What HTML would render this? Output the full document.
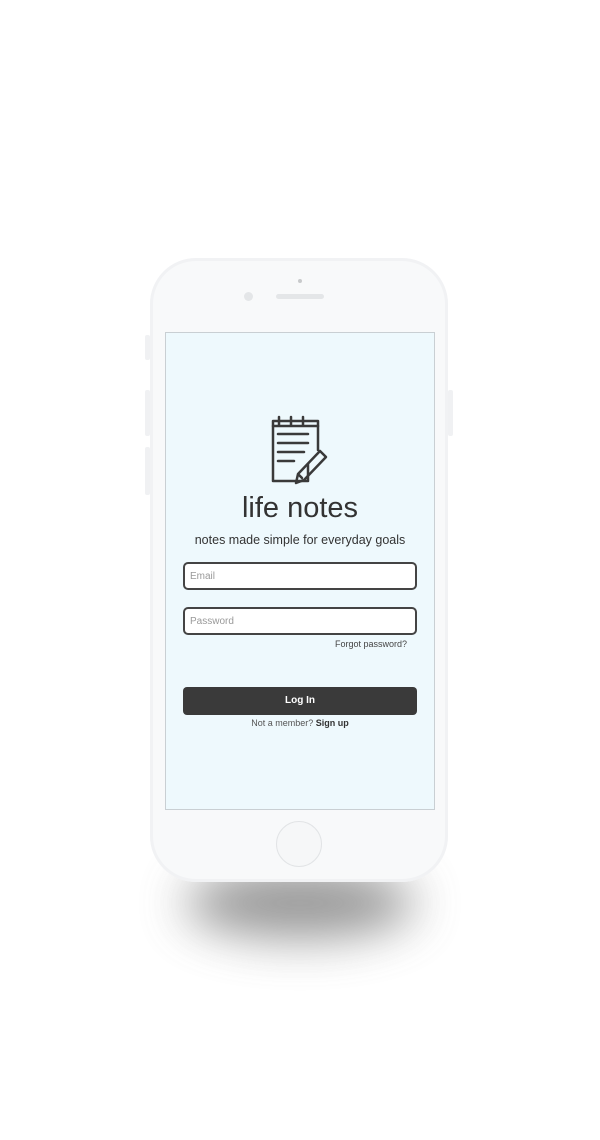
<!DOCTYPE html>
<html><head><style>
body{margin:0;width:600px;height:1140px;background:#fff;position:relative;overflow:hidden;font-family:"Liberation Sans",sans-serif}
.abs{position:absolute}
.shadow{left:185px;top:868px;width:230px;height:70px;border-radius:50%;background:#6a6a6a;filter:blur(24px);opacity:.7}
.phone{left:150px;top:258px;width:298px;height:624px;border-radius:46px;background:#f8f9fa;box-shadow:0 0 0 3px #f1f2f4 inset}
.screen{left:165px;top:332px;width:268px;height:476px;background:#eef9fd;border:1px solid #c9cfd3}
.btn{background:#f0f1f3;border-radius:2px}
.inp{box-sizing:border-box;left:183px;width:234px;height:28px;background:#fff;border:2px solid #444;border-radius:5px;color:#999;font-size:10px;padding:7px 5px}
</style></head><body>
<div class="abs shadow"></div>
<div class="abs btn" style="left:145px;top:335px;width:5px;height:25px"></div>
<div class="abs btn" style="left:145px;top:390px;width:5px;height:46px"></div>
<div class="abs btn" style="left:145px;top:447px;width:5px;height:48px"></div>
<div class="abs btn" style="left:448px;top:390px;width:5px;height:46px"></div>
<div class="abs phone"></div>
<div class="abs" style="left:298px;top:279px;width:4px;height:4px;border-radius:50%;background:#c8cacc"></div>
<div class="abs" style="left:244px;top:292px;width:9px;height:9px;border-radius:50%;background:#e4e6e8"></div>
<div class="abs" style="left:276px;top:294px;width:48px;height:5px;border-radius:3px;background:#e4e6e8"></div>
<div class="abs" style="left:276px;top:821px;width:44px;height:44px;border-radius:50%;background:#f6f7f8;border:1px solid #e2e4e6"></div>
<div class="abs screen"></div>
<svg class="abs" style="left:268px;top:414px" width="64" height="72" viewBox="0 0 64 72" fill="none" stroke="#3a3a3a" stroke-width="2.5" stroke-linecap="round" stroke-linejoin="round">
<path d="M40 50V67H5V7H50V36"/>
<path d="M11 3V11M23 3V11M35 3V11M5 12H50"/>
<path d="M10 20H40M10 29H40M10 38H36M10 47H26"/>
<path d="M52 37L58 43L36 66L28 69L30 60Z M34 64L31 61"/>
</svg>
<div class="abs" style="left:165px;width:270px;top:492px;text-align:center;font-size:29px;color:#333">life notes</div>
<div class="abs" style="left:165px;width:270px;top:533px;text-align:center;font-size:12.5px;color:#333">notes made simple for everyday goals</div>
<div class="abs inp" style="top:562px">Email</div>
<div class="abs inp" style="top:607px">Password</div>
<div class="abs" style="left:300px;width:107px;top:639px;text-align:right;font-size:9px;color:#444">Forgot password?</div>
<div class="abs" style="left:183px;top:687px;width:234px;height:28px;background:#3a3a3a;border-radius:4px;color:#fff;font-size:10px;font-weight:bold;text-align:center;line-height:28px">Log In</div>
<div class="abs" style="left:165px;width:270px;top:718px;text-align:center;font-size:9px;color:#555">Not a member? <b style="color:#333">Sign up</b></div>
</body></html>
